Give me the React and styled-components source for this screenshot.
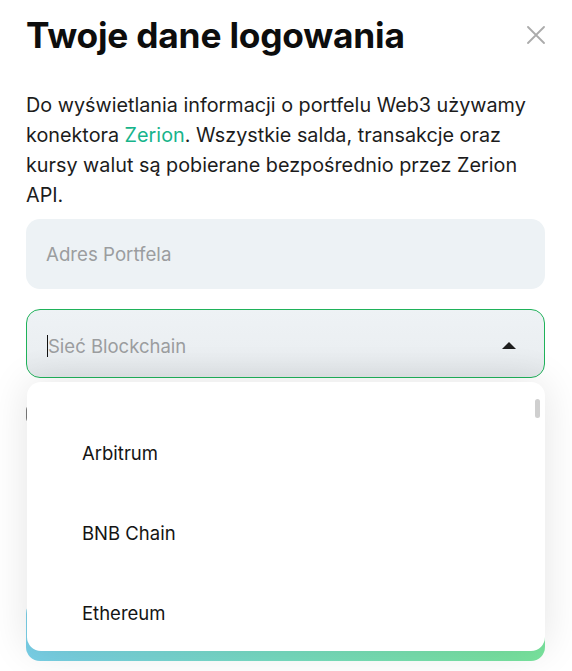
import React from 'react'
import styled, { createGlobalStyle } from 'styled-components'

const GlobalStyle = createGlobalStyle`
 html, body {
     margin: 0;
     padding: 0;
     background: #fff;
     overflow: hidden;
 }
 * { box-sizing: border-box; }
 body {
     font-family: Inter, "Noto Sans", "Liberation Sans", sans-serif;
     color: #1c1c1c;
 }
`

const Modal = styled.div`
 width: 572px;
 height: 671px;
 padding: 12px 27px 0 26px;
 background: #fff;
`

const Header = styled.div`
 display: flex;
 align-items: flex-start;
 justify-content: space-between;
`

const Title = styled.h1`
 margin: 0;
 font-size: 35.3px;
 line-height: 48px;
 font-weight: 700;
 color: #0d0d0d;
 letter-spacing: -0.2px;
`

const CloseButton = styled.button`
 border: none;
 background: none;
 padding: 0;
 margin: 13px -1px 0 0;
 width: 20px;
 height: 20px;
 display: flex;
 align-items: center;
 justify-content: center;
 cursor: pointer;
`

const Intro = styled.p`
 margin: 30px 0 0 0;
 font-size: 19.8px;
 line-height: 30px;
 color: #1c1c1c;
 a {
     color: #17b48b;
     text-decoration: none;
 }
`

const Form = styled.div`
 margin-top: 9px;
 display: flex;
 flex-direction: column;
`

const TextInput = styled.div`
 height: 70px;
 border-radius: 14px;
 background: #edf2f5;
 display: flex;
 align-items: center;
 padding: 0 20px;
 font-size: 18.7px;
 color: #9b9d9f;
`

const SelectWrap = styled.div`
 position: relative;
 margin-top: 20px;
`

const SelectBox = styled.div`
 height: 69px;
 border-radius: 14px;
 border: 1px solid #1fb25a;
 background: linear-gradient(180deg, #eef2f5 0%, #ebeff2 60%, #e3e7ea 100%);
 display: flex;
 align-items: center;
 justify-content: space-between;
 padding: 4px 28px 0 20px;
 font-size: 18.5px;
 color: #9b9d9f;
`

const Placeholder = styled.span`
 display: flex;
 align-items: center;
 &::before {
     content: '';
     width: 1px;
     height: 22px;
     background: #111;
 }
`

const Caret = styled.span`
 width: 0;
 height: 0;
 border-left: 7px solid transparent;
 border-right: 7px solid transparent;
 border-bottom: 7px solid #1e1e1e;
`

const Menu = styled.ul`
 position: absolute;
 top: calc(100% + 4px);
 left: 1px;
 right: 0;
 height: 269px;
 margin: 0;
 padding: 31px 0 0 0;
 list-style: none;
 background: #fff;
 border-radius: 14px;
 box-shadow: 0 0 40px rgba(0, 0, 0, 0.11);
 overflow: hidden;
 z-index: 2;
`

const Scrollbar = styled.span`
 position: absolute;
 top: 17px;
 right: 5px;
 width: 5px;
 height: 19px;
 border-radius: 3px;
 background: #cfcfcf;
`

const MenuItem = styled.li`
 height: 80px;
 display: flex;
 align-items: center;
 padding-left: 55px;
 font-size: 18.5px;
 color: #141414;
`

const CheckRow = styled.label`
 margin-top: 26px;
 display: flex;
 align-items: flex-start;
 gap: 12px;
 font-size: 15px;
 line-height: 22px;
 color: #555;
`

const Checkbox = styled.span`
 flex: none;
 width: 20px;
 height: 20px;
 border-radius: 6px;
 border: 1.5px solid #7a7a7a;
 background: #fff;
`

const SubmitButton = styled.button`
 margin-top: 174px;
 height: 61px;
 border: none;
 border-radius: 14px;
 background: linear-gradient(90deg, #79cfe7 0%, #77dcc0 50%, #79e49d 100%);
 color: #fff;
 font-family: inherit;
 font-size: 18px;
 font-weight: 600;
`

const chains = ['Arbitrum', 'BNB Chain', 'Ethereum', 'Optimism', 'Polygon']

const App = () => {
    return (
        <>
            <GlobalStyle />
            <Modal>
                <Header>
                    <Title>Twoje dane logowania</Title>
                    <CloseButton aria-label="Zamknij">
                        <svg width="18" height="18" viewBox="0 0 18 18">
                            <path d="M1 1L17 17M17 1L1 17" stroke="#ababab" strokeWidth="1.8" strokeLinecap="round" />
                        </svg>
                    </CloseButton>
                </Header>
                <Intro>
                    Do wyświetlania informacji o portfelu Web3 używamy konektora <a href="#">Zerion</a>. Wszystkie salda, transakcje oraz kursy walut są pobierane bezpośrednio przez Zerion API.
                </Intro>
                <Form>
                    <TextInput>Adres Portfela</TextInput>
                    <SelectWrap>
                        <SelectBox>
                            <Placeholder>Sieć Blockchain</Placeholder>
                            <Caret />
                        </SelectBox>
                        <Menu>
                            <Scrollbar />
                            {chains.map((c) => (
                                <MenuItem key={c}>{c}</MenuItem>
                            ))}
                        </Menu>
                    </SelectWrap>
                    <CheckRow>
                        <Checkbox />
                        <span>Akceptuję regulamin serwisu.</span>
                    </CheckRow>
                    <SubmitButton>Zaloguj się</SubmitButton>
                </Form>
            </Modal>
        </>
    )
}

export default App
